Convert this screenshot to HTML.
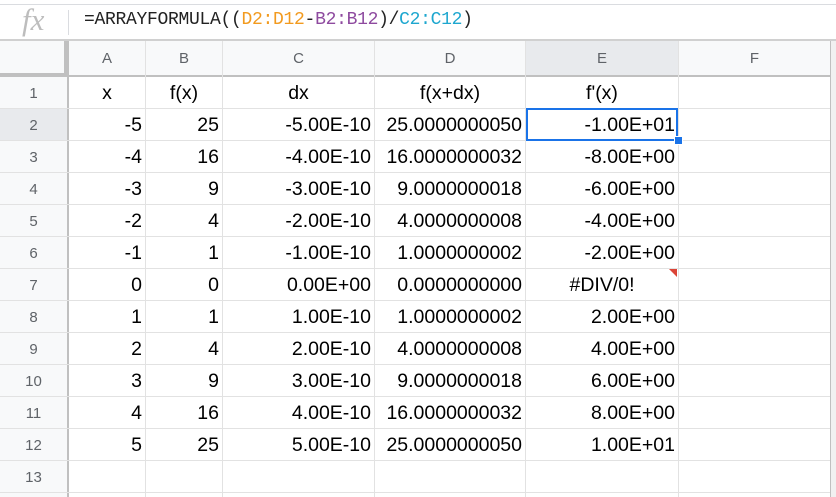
<!DOCTYPE html>
<html><head><style>
body{margin:0;width:836px;height:497px;overflow:hidden;background:#fff;font-family:"Liberation Sans",Arial,sans-serif;position:relative}
.a{position:absolute}
.h{position:absolute;background:#f8f9fa;color:#5f6368;font-size:15px;text-align:center;box-sizing:border-box}
.c{position:absolute;font-size:19.5px;color:#000;box-sizing:border-box;padding:0 3px;white-space:nowrap;line-height:33px}
.vl{position:absolute;width:1px;background:#e2e2e2}
.hl{position:absolute;height:1px;background:#e2e2e2}
</style></head><body>
<div class="a" style="left:0;top:4px;width:836px;height:1px;background:#dadce0"></div>
<div class="a" style="left:22px;top:2px;font-family:'Liberation Serif',serif;font-style:italic;font-size:31px;color:#bdbdbd">fx</div>
<div class="a" style="left:68px;top:10px;width:1px;height:25px;background:#dadce0"></div>
<div class="a" style="left:84px;top:10px;font-family:'Liberation Mono',monospace;font-size:18px;color:#222;letter-spacing:-0.3px">=ARRAYFORMULA((<span style="color:#f29a1e">D2:D12</span>-<span style="color:#8e4a9f">B2:B12</span>)/<span style="color:#1ea7cf">C2:C12</span>)</div>
<div class="a" style="left:0;top:39px;width:836px;height:2px;background:#d0d0d0"></div>
<div class="h" style="left:0;top:41px;width:836px;height:36px"></div>
<div class="a" style="left:0;top:41px;width:64px;height:32px;background:#f8f9fa;border-right:4px solid #c0c0c0;border-bottom:4px solid #c0c0c0"></div>
<div class="a" style="left:0;top:75px;width:836px;height:2px;background:#c0c0c0"></div>
<div class="a" style="left:526px;top:41px;width:152px;height:34px;background:#e8eaed"></div>
<div class="a" style="left:0;top:77px;width:67px;height:420px;background:#f8f9fa"></div>
<div class="a" style="left:0;top:109px;width:67px;height:32px;background:#e8eaed"></div>
<div class="a" style="left:67px;top:41px;width:2px;height:456px;background:#c0c0c0"></div>
<div class="a" style="left:830px;top:41px;width:6px;height:456px;background:#f1f1f1"></div>
<div id="g"></div>
<script>
var cols=[69,146,223,375,526,679,831],names="ABCDEF";
var rows=[];for(var i=0;i<=13;i++)rows.push(77+Math.round(i*32));
var h="";
for(var i=1;i<cols.length;i++){var x=cols[i]-1;h+='<div class="vl" style="left:'+x+'px;top:41px;height:456px;background:'+(i<6?'#e2e2e2':'#c0c0c0')+'"></div>';}
for(var i=0;i<6;i++){h+='<div class="h" style="left:'+cols[i]+'px;top:41px;width:'+(cols[i+1]-cols[i]-1)+'px;height:34px;line-height:36px;background:transparent">'+names[i]+'</div>';}
for(var r=1;r<=13;r++){var y=rows[r];h+='<div class="hl" style="left:0;top:'+(y-1)+'px;width:830px"></div>';
h+='<div class="h" style="left:0;top:'+rows[r-1]+'px;width:67px;height:32px;line-height:33px;background:transparent">'+r+'</div>';}
var data=[["x","f(x)","dx","f(x+dx)","f'(x)"]];
var exts=["0000000000","0000000002","0000000008","0000000018","0000000032","0000000050"];
for(var x=-5;x<=5;x++){
var dxs=(x<0?"-":"")+Math.abs(x)+".00E-10";if(x==0)dxs="0.00E+00";
var fps=x==0?"#DIV/0!":(x<0?"-":"")+(Math.abs(x)==5?"1.00E+01":(2*Math.abs(x))+".00E+00");
data.push([x,x*x,dxs,(x*x)+"."+exts[Math.abs(x)],fps]);}
for(var r=0;r<data.length;r++){var y=rows[r];for(var c=0;c<5;c++){var v=data[r][c];var center=(r==0)||(v=="#DIV/0!");
h+='<div class="c" style="left:'+cols[c]+'px;top:'+y+'px;width:'+(cols[c+1]-cols[c]-1)+'px;text-align:'+(center?'center':'right')+'">'+v+'</div>';}}
document.getElementById('g').innerHTML=h;
</script>
<div class="a" style="left:526px;top:108px;width:148px;height:29px;border:2px solid #1a73e8"></div>
<div class="a" style="left:674px;top:136px;width:7px;height:7px;background:#1a73e8;border:1px solid #fff"></div>
<div class="a" style="left:669px;top:269px;width:0;height:0;border-top:8px solid #db4437;border-left:8px solid transparent"></div>
</body></html>
